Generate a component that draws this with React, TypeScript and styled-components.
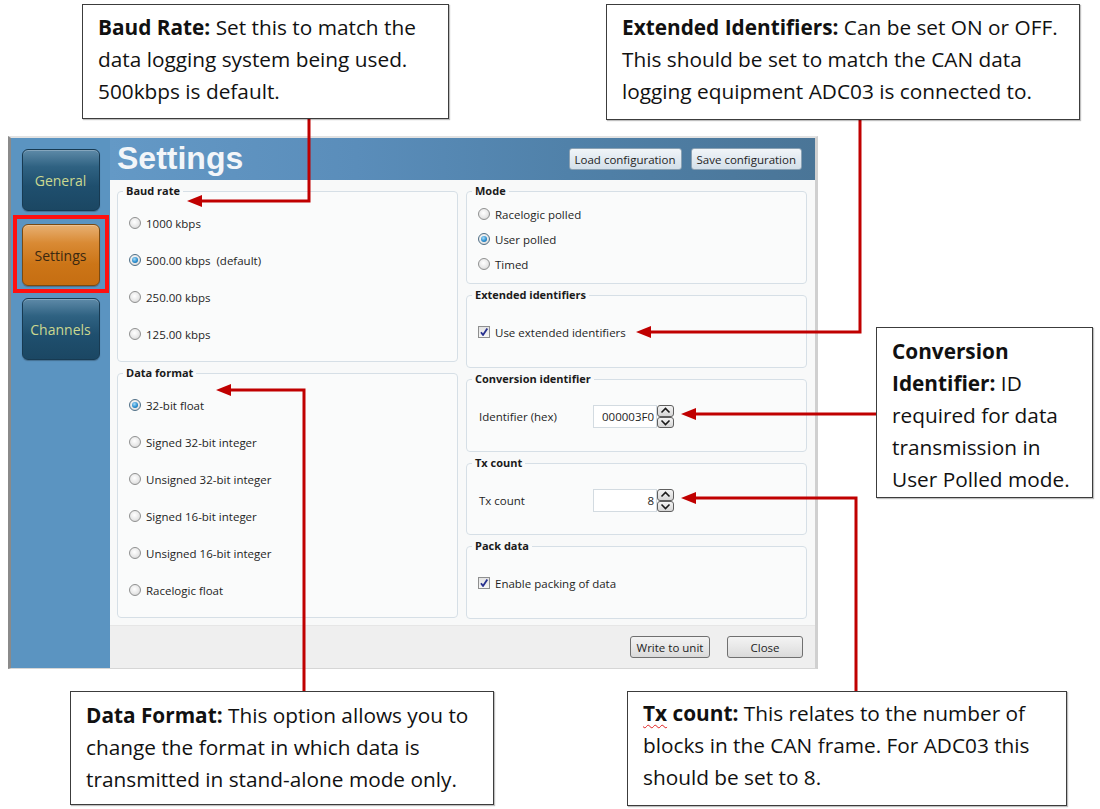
import React from "react";
import styled, { createGlobalStyle, css } from "styled-components";

const GlobalStyle = createGlobalStyle`
  html, body { margin: 0; padding: 0; background: #ffffff; }
  body { font-family: "Open Sans", "Noto Sans", sans-serif; }
  * { box-sizing: border-box; }
`;

const Page = styled.div`
  position: relative;
  width: 1100px;
  height: 809px;
  overflow: hidden;
  background: #ffffff;
  padding: 136px 0 0 8px;
`;

const AppWindow = styled.div`
  display: flex;
  width: 810px;
  height: 533px;
  border-top: 2px solid #e2e2e2;
  border-left: 3px solid #8a8a8a;
  border-right: 3px solid #d0d0d0;
  border-bottom: 1px solid #d6d6d6;
  font-family: "Open Sans", sans-serif;
  font-size: 11.5px;
  color: #1e1e1e;
`;

const Sidebar = styled.div`
  width: 99px;
  flex: none;
  background: #5b94c1;
  display: flex;
  flex-direction: column;
  align-items: center;
  padding-top: 11px;
  gap: 4px;
`;

const NavButton = styled.div<{ $active?: boolean }>`
  width: 78px;
  height: 62px;
  border-radius: 6px;
  display: flex;
  align-items: center;
  justify-content: center;
  font-size: 14px;
  font-family: "Open Sans", sans-serif;
  border: 1px solid #173a52;
  color: #cbd890;
  background: linear-gradient(180deg, #5e8aa8 0%, #2f6282 28%, #1f4f6e 60%, #1b4763 100%);
  box-shadow: inset 0 1px 0 rgba(255, 255, 255, 0.25), 0 1px 1px rgba(0, 0, 0, 0.25);
  ${(p) =>
    p.$active &&
    css`
      border-color: #7a4a12;
      color: #3b2810;
      background: linear-gradient(180deg, #e8b072 0%, #d98a34 30%, #cc7517 65%, #c66e12 100%);
    `}
`;

const Highlight = styled.div`
  width: 96px;
  border: 4px solid #ff1010;
  padding: 5px 5px 3px 5px;
  display: flex;
  justify-content: center;
  margin-bottom: 1px;
`;

const Main = styled.div`
  flex: 1;
  display: flex;
  flex-direction: column;
  min-width: 0;
`;

const Header = styled.div`
  height: 42px;
  flex: none;
  display: flex;
  align-items: center;
  padding: 0 13px 0 7px;
  gap: 9px;
  background: linear-gradient(90deg, #6499c6 0%, #5a8dba 35%, #5081a9 65%, #4a7597 100%);
`;

const Title = styled.div`
  flex: 1;
  font-family: "Liberation Sans", Arial, sans-serif;
  font-weight: bold;
  font-size: 32px;
  line-height: 1;
  color: #f3f6f9;
  padding-bottom: 2px;
`;

const HeaderButton = styled.div`
  height: 22px;
  padding: 0 5px;
  display: flex;
  align-items: center;
  border: 1px solid #8aa1b3;
  border-radius: 3px;
  background: linear-gradient(180deg, #f1f5f8 0%, #e2eaf1 50%, #d3dfe9 100%);
  font-size: 11.5px;
  color: #1e1e1e;
  white-space: nowrap;
`;

const Content = styled.div`
  flex: 1;
  display: grid;
  grid-template-columns: 341px 341px;
  column-gap: 8px;
  padding: 3px 8px 0 7px;
  background: #f8f9f9;
`;

const Column = styled.div<{ $gap: number }>`
  display: flex;
  flex-direction: column;
  gap: ${(p) => p.$gap}px;
`;

const Group = styled.fieldset<{ $h: number; $pt: number; $gap?: number }>`
  margin: 0;
  height: ${(p) => p.$h}px;
  padding: ${(p) => p.$pt}px 12px 0 11px;
  border: 1px solid #d6dfe6;
  border-radius: 4px;
  background: #fafbfb;
  display: flex;
  flex-direction: column;
  gap: ${(p) => p.$gap ?? 0}px;
  min-width: 0;
`;

const Legend = styled.legend`
  font-weight: bold;
  font-size: 11px;
  line-height: 16px;
  padding: 0 3px;
  margin-left: -6px;
  color: #1a1a1a;
`;

const OptionRow = styled.label`
  display: flex;
  align-items: center;
  gap: 5px;
  height: 20px;
  white-space: pre;
`;

const RadioDot = styled.span<{ $checked?: boolean }>`
  width: 12px;
  height: 12px;
  flex: none;
  border-radius: 50%;
  border: 1px solid #8f9090;
  background: radial-gradient(circle at 45% 40%, #ffffff 0%, #e8e8e8 55%, #c8c8c8 100%);
  display: flex;
  align-items: center;
  justify-content: center;
  ${(p) =>
    p.$checked &&
    css`
      border-color: #4f6f86;
      &::after {
        content: "";
        width: 6px;
        height: 6px;
        border-radius: 50%;
        background: radial-gradient(circle at 40% 35%, #a8dcf8 0%, #2b8fd0 55%, #0d5891 100%);
      }
    `}
`;

const CheckBox = styled.span`
  width: 12px;
  height: 12px;
  flex: none;
  border: 1px solid #8e8f8f;
  background: linear-gradient(180deg, #e4e4e4 0%, #f6f6f6 100%);
  display: flex;
  align-items: center;
  justify-content: center;
`;

const FieldRow = styled.div`
  display: flex;
  align-items: center;
  height: 23px;
  padding-left: 1px;
`;

const FieldLabel = styled.span`
  width: 114px;
  flex: none;
`;

const NumberBox = styled.div`
  width: 64px;
  height: 23px;
  border: 1px solid #d3dbe1;
  background: #ffffff;
  display: flex;
  align-items: center;
  justify-content: flex-end;
  padding-right: 2px;
`;

const Spinner = styled.div`
  display: flex;
  flex-direction: column;
  width: 17px;
`;

const SpinButton = styled.div`
  height: 11.5px;
  border: 1px solid #5f5f5f;
  border-radius: 3px;
  background: linear-gradient(180deg, #f4f4f4 0%, #d6d6d6 100%);
  display: flex;
  align-items: center;
  justify-content: center;
`;

const Footer = styled.div`
  height: 43px;
  flex: none;
  display: flex;
  justify-content: flex-end;
  align-items: center;
  gap: 17px;
  padding-right: 12px;
  background: #efefef;
  border-top: 1px solid #e6e6e6;
`;

const FooterButton = styled.div<{ $w: number }>`
  width: ${(p) => p.$w}px;
  height: 22px;
  display: flex;
  align-items: center;
  justify-content: center;
  border: 1px solid #707070;
  border-radius: 3px;
  background: linear-gradient(180deg, #f3f3f3 0%, #e8e8e8 50%, #dadada 100%);
  font-size: 11.5px;
`;

const Callout = styled.div<{ $x: number; $y: number; $w: number; $h: number; $pt: number }>`
  position: absolute;
  left: ${(p) => p.$x}px;
  top: ${(p) => p.$y}px;
  width: ${(p) => p.$w}px;
  height: ${(p) => p.$h}px;
  padding: ${(p) => p.$pt}px 6px 0 15px;
  border: 1.5px solid #3c3c3c;
  background: #ffffff;
  box-shadow: 1px 1px 1px rgba(0, 0, 0, 0.25);
  font-family: "Open Sans", "Noto Sans", sans-serif;
  font-size: 20.8px;
  line-height: 32px;
  color: #111111;
  white-space: nowrap;
  z-index: 2;
`;

const Strong = styled.b`
  font-weight: bold;
`;

const Squiggle = styled.span`
  text-decoration: underline wavy #e02020;
  text-decoration-thickness: 1px;
  text-underline-offset: 3px;
`;

const ArrowLayer = styled.svg`
  position: absolute;
  left: 0;
  top: 0;
  width: 1100px;
  height: 809px;
  pointer-events: none;
  z-index: 1;
`;

const Radio = ({ label, checked }: { label: string; checked?: boolean }) => (
  <OptionRow>
    <RadioDot $checked={checked} />
    {label}
  </OptionRow>
);

const Check = ({ label }: { label: string }) => (
  <OptionRow>
    <CheckBox>
      <svg width="10" height="10" viewBox="0 0 10 10">
        <path d="M2 5.2 L4 8 L8.3 1.5" fill="none" stroke="#28318f" strokeWidth="1.8" strokeLinejoin="round" />
      </svg>
    </CheckBox>
    {label}
  </OptionRow>
);

const Chevron = ({ up }: { up?: boolean }) => (
  <svg width="11" height="7" viewBox="0 0 11 7">
    <path
      d={up ? "M1.5 5.5 L5.5 1.5 L9.5 5.5" : "M1.5 1.5 L5.5 5.5 L9.5 1.5"}
      fill="none"
      stroke="#1a1a1a"
      strokeWidth="1.6"
    />
  </svg>
);

const NumberField = ({ label, value }: { label: string; value: string }) => (
  <FieldRow>
    <FieldLabel>{label}</FieldLabel>
    <NumberBox>{value}</NumberBox>
    <Spinner>
      <SpinButton>
        <Chevron up />
      </SpinButton>
      <SpinButton>
        <Chevron />
      </SpinButton>
    </Spinner>
  </FieldRow>
);

const RED = "#c00000";

const Arrow = ({ points, tip }: { points: string; tip: [number, number] }) => {
  const [x, y] = tip;
  return (
    <g>
      <polyline points={points} fill="none" stroke={RED} strokeWidth="3" />
      <polygon points={`${x},${y} ${x + 15},${y - 6} ${x + 15},${y + 6}`} fill={RED} />
    </g>
  );
};

export default function App() {
  return (
    <>
      <GlobalStyle />
      <Page>
        <AppWindow>
          <Sidebar>
            <NavButton>General</NavButton>
            <Highlight>
              <NavButton $active>Settings</NavButton>
            </Highlight>
            <NavButton>Channels</NavButton>
          </Sidebar>
          <Main>
            <Header>
              <Title>Settings</Title>
              <HeaderButton>Load configuration</HeaderButton>
              <HeaderButton>Save configuration</HeaderButton>
            </Header>
            <Content>
              <Column $gap={3}>
                <Group $h={179} $pt={14} $gap={17}>
                  <Legend>Baud rate</Legend>
                  <Radio label="1000 kbps" />
                  <Radio label="500.00 kbps  (default)" checked />
                  <Radio label="250.00 kbps" />
                  <Radio label="125.00 kbps" />
                </Group>
                <Group $h={253} $pt={14} $gap={17}>
                  <Legend>Data format</Legend>
                  <Radio label="32-bit float" checked />
                  <Radio label="Signed 32-bit integer" />
                  <Radio label="Unsigned 32-bit integer" />
                  <Radio label="Signed 16-bit integer" />
                  <Radio label="Unsigned 16-bit integer" />
                  <Radio label="Racelogic float" />
                </Group>
              </Column>
              <Column $gap={3}>
                <Group $h={101} $pt={5} $gap={5}>
                  <Legend>Mode</Legend>
                  <Radio label="Racelogic polled" />
                  <Radio label="User polled" checked />
                  <Radio label="Timed" />
                </Group>
                <Group $h={81} $pt={19}>
                  <Legend>Extended identifiers</Legend>
                  <Check label="Use extended identifiers" />
                </Group>
                <Group $h={81} $pt={18}>
                  <Legend>Conversion identifier</Legend>
                  <NumberField label="Identifier (hex)" value="000003F0" />
                </Group>
                <Group $h={80} $pt={18}>
                  <Legend>Tx count</Legend>
                  <NumberField label="Tx count" value="8" />
                </Group>
                <Group $h={81} $pt={19}>
                  <Legend>Pack data</Legend>
                  <Check label="Enable packing of data" />
                </Group>
              </Column>
            </Content>
            <Footer>
              <FooterButton $w={80}>Write to unit</FooterButton>
              <FooterButton $w={76}>Close</FooterButton>
            </Footer>
          </Main>
        </AppWindow>

        <ArrowLayer viewBox="0 0 1100 809">
          <Arrow points="309,118 309,201 200,201" tip={[187, 201]} />
          <Arrow points="860,119 860,332 650,332" tip={[636, 332]} />
          <Arrow points="877,414 694,414" tip={[681, 414]} />
          <Arrow points="856,692 856,498 694,498" tip={[681, 498]} />
          <Arrow points="304,692 304,390 229,390" tip={[216, 390]} />
        </ArrowLayer>

        <Callout $x={82} $y={4} $w={367} $h={115} $pt={6}>
          <Strong>Baud Rate:</Strong> Set this to match the
          <br />
          data logging system being used.
          <br />
          500kbps is default.
        </Callout>

        <Callout $x={606} $y={4} $w={474} $h={116} $pt={6}>
          <Strong>Extended Identifiers:</Strong> Can be set ON or OFF.
          <br />
          This should be set to match the CAN data
          <br />
          logging equipment ADC03 is connected to.
        </Callout>

        <Callout $x={876} $y={327} $w={217} $h={171} $pt={7}>
          <Strong>Conversion</Strong>
          <br />
          <Strong>Identifier:</Strong> ID
          <br />
          required for data
          <br />
          transmission in
          <br />
          User Polled mode.
        </Callout>

        <Callout $x={70} $y={691} $w={424} $h={114} $pt={7}>
          <Strong>Data Format:</Strong> This option allows you to
          <br />
          change the format in which data is
          <br />
          transmitted in stand-alone mode only.
        </Callout>

        <Callout $x={627} $y={691} $w={440} $h={115} $pt={5}>
          <Strong>
            <Squiggle>Tx</Squiggle> count:
          </Strong>{" "}
          This relates to the number of
          <br />
          blocks in the CAN frame. For ADC03 this
          <br />
          should be set to 8.
        </Callout>
      </Page>
    </>
  );
}
